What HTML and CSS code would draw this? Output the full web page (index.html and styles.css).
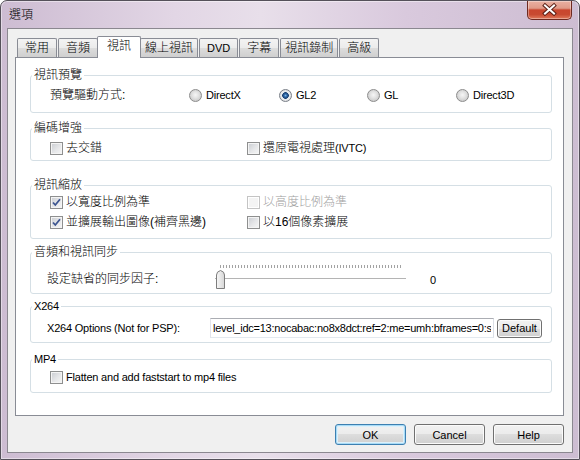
FILE: index.html
```html
<!DOCTYPE html>
<html lang="zh-Hant">
<head>
<meta charset="utf-8">
<title>選項</title>
<link rel="stylesheet" href="styles.css">
</head>
<body>
<div class="window">
  <div class="titlebar">
    <span class="title">選項</span>
    <button class="close" aria-label="Close">
      <svg width="43" height="18" viewBox="0 0 43 18">
        <path d="M17 4.5 L26 12.5 M26 4.5 L17 12.5" stroke="#5b1f16" stroke-width="4" stroke-linecap="square" fill="none"/>
        <path d="M17 4.5 L26 12.5 M26 4.5 L17 12.5" stroke="#ffffff" stroke-width="2" stroke-linecap="square" fill="none"/>
      </svg>
    </button>
  </div>
  <div class="client">
    <div class="tabstrip">
      <span class="tab">常用</span>
      <span class="tab">音頻</span>
      <span class="tab active">視訊</span>
      <span class="tab wide">線上視訊</span>
      <span class="tab en">DVD</span>
      <span class="tab">字幕</span>
      <span class="tab wide">視訊錄制</span>
      <span class="tab">高級</span>
    </div>
    <div class="panel">
      <fieldset class="group g1">
        <legend>視訊預覽</legend>
        <div class="body radios">
          <span class="lbl">預覽驅動方式:</span>
          <label class="opt"><span class="radio"></span><span class="en">DirectX</span></label>
          <label class="opt"><span class="radio on"></span><span class="en">GL2</span></label>
          <label class="opt"><span class="radio"></span><span class="en">GL</span></label>
          <label class="opt"><span class="radio"></span><span class="en">Direct3D</span></label>
        </div>
      </fieldset>

      <fieldset class="group g2">
        <legend>編碼增強</legend>
        <div class="body checks">
          <label class="chk"><span class="cb"></span><span>去交錯</span></label>
          <label class="chk"><span class="cb"></span><span>還原電視處理<span class="en">(IVTC)</span></span></label>
        </div>
      </fieldset>

      <fieldset class="group g3">
        <legend>視訊縮放</legend>
        <div class="body checks">
          <label class="chk"><span class="cb"><svg width="11" height="11" viewBox="0 0 11 11"><path d="M2 5.5 L4.3 8 L9 2.3" stroke="#3d5590" stroke-width="1.8" fill="none"/></svg></span><span>以寬度比例為準</span></label>
          <label class="chk dis"><span class="cb"></span><span>以高度比例為準</span></label>
          <label class="chk"><span class="cb"><svg width="11" height="11" viewBox="0 0 11 11"><path d="M2 5.5 L4.3 8 L9 2.3" stroke="#3d5590" stroke-width="1.8" fill="none"/></svg></span><span>並擴展輸出圖像(補齊黑邊)</span></label>
          <label class="chk"><span class="cb"></span><span>以16個像素擴展</span></label>
        </div>
      </fieldset>

      <fieldset class="group g4">
        <legend>音頻和視訊同步</legend>
        <div class="body slider-row">
          <span class="lbl">設定缺省的同步因子:</span>
          <div class="slider">
            <div class="ticks"></div>
            <div class="track"></div>
            <svg class="thumb" width="10" height="19" viewBox="0 0 10 19">
              <defs>
                <linearGradient id="tg" x1="0" y1="0" x2="1" y2="0">
                  <stop offset="0" stop-color="#f7f7f7"/>
                  <stop offset="1" stop-color="#d6d6d6"/>
                </linearGradient>
              </defs>
              <path d="M0.5 18.5 V5 Q0.5 1.5 4.5 0.5 Q8.5 1.5 8.5 5 V18.5 Z" fill="url(#tg)" stroke="#7d7d7d"/>
            </svg>
          </div>
          <span class="val en">0</span>
        </div>
      </fieldset>

      <fieldset class="group g5">
        <legend class="en">X264</legend>
        <div class="body x264-row">
          <span class="lbl en">X264 Options (Not for PSP):</span>
          <input class="text" type="text" value="level_idc=13:nocabac:no8x8dct:ref=2:me=umh:bframes=0:s">
          <button class="btn small">Default</button>
        </div>
      </fieldset>

      <fieldset class="group g6">
        <legend class="en">MP4</legend>
        <div class="body">
          <label class="chk"><span class="cb"></span><span class="en">Flatten and add faststart to mp4 files</span></label>
        </div>
      </fieldset>
    </div>
    <div class="buttons">
      <button class="btn default">OK</button>
      <button class="btn">Cancel</button>
      <button class="btn">Help</button>
    </div>
  </div>
</div>
</body>
</html>
```

FILE: styles.css
```css
* { box-sizing: border-box; }

html, body {
  margin: 0;
  padding: 0;
}

body {
  width: 580px;
  height: 460px;
  overflow: hidden;
  font-family: "Liberation Sans", "Noto Sans CJK TC", sans-serif;
  font-size: 12px;
  font-weight: 300;
  color: #000;
  background: #fff;
}

.en {
  font-family: "Liberation Sans", sans-serif;
  font-size: 11px;
  font-weight: 400;
  letter-spacing: -0.2px;
}

.window {
  width: 580px;
  height: 460px;
  border: 1px solid #55515a;
  border-radius: 7px 7px 0 0;
  background: linear-gradient(90deg, #cdbcd2 0%, #e2d6e5 30%, #e8dfea 45%, #d9c9dd 70%, #cdbdd2 100%);
  box-shadow: inset 0 0 0 1px rgba(255, 255, 255, 0.45);
  display: flex;
  flex-direction: column;
}

.titlebar {
  height: 27px;
  flex: none;
  display: flex;
  align-items: flex-start;
}

.title {
  padding-left: 8px;
  line-height: 28px;
  font-size: 12px;
}

.close {
  margin-left: auto;
  margin-right: 7px;
  width: 45px;
  height: 19px;
  padding: 0;
  border: 1px solid #6e2a20;
  border-top: none;
  border-radius: 0 0 5px 5px;
  background: linear-gradient(#eab0a2 0%, #e09a88 40%, #c9462e 50%, #c84a31 75%, #e07a5c 100%);
  box-shadow: inset 0 0 0 1px rgba(255, 255, 255, 0.35);
  display: flex;
  align-items: center;
  justify-content: center;
}

.client {
  margin: 0 6px;
  height: 425px;
  flex: none;
  border: 1px solid #8b8890;
  background: #f0f0f0;
  padding: 7px 8px 0 7px;
  display: flex;
  flex-direction: column;
}

/* tabs */
.tabstrip {
  height: 21px;
  flex: none;
  display: flex;
  align-items: flex-end;
  gap: 1px;
  padding-left: 2px;
}

.tab {
  height: 19px;
  line-height: 18px;
  padding: 0 7px;
  border: 1px solid #898c95;
  border-bottom: none;
  border-radius: 2px 2px 0 0;
  background: linear-gradient(#f3f3f3 0%, #ebebeb 50%, #dddddd 50%, #cfcfcf 100%);
  white-space: nowrap;
}

.tab.wide { padding: 0 4px; }
.tab.en { letter-spacing: 0; }

.tab.active {
  height: 22px;
  margin: 0 -2px -1px;
  padding: 0 9px 3px;
  background: #fff;
  z-index: 1;
}

.panel {
  height: 359px;
  flex: none;
  border: 1px solid #898c95;
  background: #fff;
  padding: 10px 11px 0 14px;
}

/* group boxes */
.group {
  margin: 0;
  padding: 0;
  min-width: 0;
  border: 1px solid #d5dfe5;
  border-radius: 3px;
}

.group legend {
  margin-left: 1px;
  padding: 0 2px;
  line-height: 14px;
}

.group legend.en { font-size: 11px; }

.g2 { margin-top: 8px; }
.g3 { margin-top: 17px; }
.g4 { margin-top: 6px; }
.g5 { margin-top: 5px; }
.g6 { margin-top: 9px; }

.g1 .body { padding: 5px 0 9px 19px; }
.g2 .body { padding: 5px 0 4px 19px; }
.g3 .body { padding: 2px 0 8px 19px; }
.g4 .body { padding: 5px 0 3px 16px; }
.g5 .body { padding: 5px 0 4px 16px; }
.g6 .body { padding: 3px 0 7px 19px; }

.lbl { white-space: nowrap; }

/* radios */
.radios {
  display: grid;
  grid-template-columns: 139px 90px 88px 89px auto;
  align-items: center;
  line-height: 16px;
}

.opt {
  display: flex;
  align-items: center;
  gap: 4px;
  height: 16px;
}

.radio {
  width: 13px;
  height: 13px;
  flex: none;
  border-radius: 50%;
  border: 1px solid #8c8c8c;
  background: radial-gradient(circle at 50% 45%, #f6f6f6 0, #e4e4e4 3px, #cdcdcd 6px);
}

.radio.on {
  border-color: #7a7f88;
  background: radial-gradient(circle at 50% 50%, #7fb3e0 0, #2d67a8 1.5px, #173d6e 3px, #dfe6ee 3.6px, #ececec 4.5px, #cfd2d6 6px);
}

/* checkboxes */
.checks {
  display: grid;
  grid-template-columns: 197px auto;
  row-gap: 4px;
  line-height: 16px;
}

.chk {
  display: flex;
  align-items: center;
  gap: 3px;
  height: 16px;
  white-space: nowrap;
  line-height: 16px;
}

.cb {
  width: 13px;
  height: 13px;
  flex: none;
  border: 1px solid #8e8f8f;
  background: linear-gradient(135deg, #c9ccd1 0%, #e6e7e9 55%, #f6f6f6 100%);
  box-shadow: inset 0 0 0 1px #f4f4f4;
  display: flex;
  align-items: center;
  justify-content: center;
}

.chk.dis { color: #a0a0a0; }
.chk.dis .cb {
  border-color: #c4c4c4;
  background: #f4f4f4;
  box-shadow: inset 0 0 0 1px #fff;
}

/* slider */
.slider-row {
  display: flex;
  align-items: center;
  height: 26px;
  box-sizing: content-box;
}

.slider-row .lbl { width: 168px; flex: none; }

.slider {
  position: relative;
  width: 191px;
  height: 26px;
  flex: none;
}

.ticks {
  position: absolute;
  top: 1px;
  left: 5px;
  right: 5px;
  height: 3px;
  background: repeating-linear-gradient(90deg, #a3a3a3 0 1px, transparent 1px 3px);
}

.track {
  position: absolute;
  top: 14px;
  left: 0;
  right: 0;
  height: 2px;
  border-top: 1px solid #b4b4b4;
  border-bottom: 1px solid #ffffff;
  background: #e6e6e6;
}

.thumb {
  position: absolute;
  left: 1px;
  top: 6px;
}

.val {
  margin-left: 24px;
  padding-top: 6px;
}

/* x264 row */
.x264-row {
  display: flex;
  align-items: center;
  height: 20px;
  box-sizing: content-box;
}

.x264-row .lbl { width: 163px; flex: none; }

.text {
  width: 284px;
  height: 20px;
  flex: none;
  margin: 0;
  padding: 0 2px;
  border: 1px solid;
  border-color: #abadb3 #dbdfe6 #e3e9ef #e2e3ea;
  background: #fff;
  color: #000;
  font-family: "Liberation Sans", sans-serif;
  font-size: 11px;
  letter-spacing: -0.25px;
  outline: none;
}

/* buttons */
.btn {
  width: 71px;
  height: 21px;
  margin: 0;
  padding: 0;
  border: 1px solid #707070;
  border-radius: 3px;
  background: linear-gradient(#f2f2f2 0%, #ebebeb 50%, #dddddd 50%, #cfcfcf 100%);
  box-shadow: inset 0 0 0 1px #fbfbfb;
  font-family: "Liberation Sans", sans-serif;
  font-size: 11px;
  font-weight: 400;
  color: #000;
}

.btn.small {
  width: 45px;
  height: 19px;
  margin-left: 3px;
  flex: none;
}

.btn.default {
  border-color: #3c7fb1;
  box-shadow: inset 0 0 0 1px #a8dbf6, inset 0 0 0 2px #dcf0fb;
}

.buttons {
  display: flex;
  justify-content: flex-end;
  gap: 8px;
  margin-top: 8px;
  flex: none;
}
```
